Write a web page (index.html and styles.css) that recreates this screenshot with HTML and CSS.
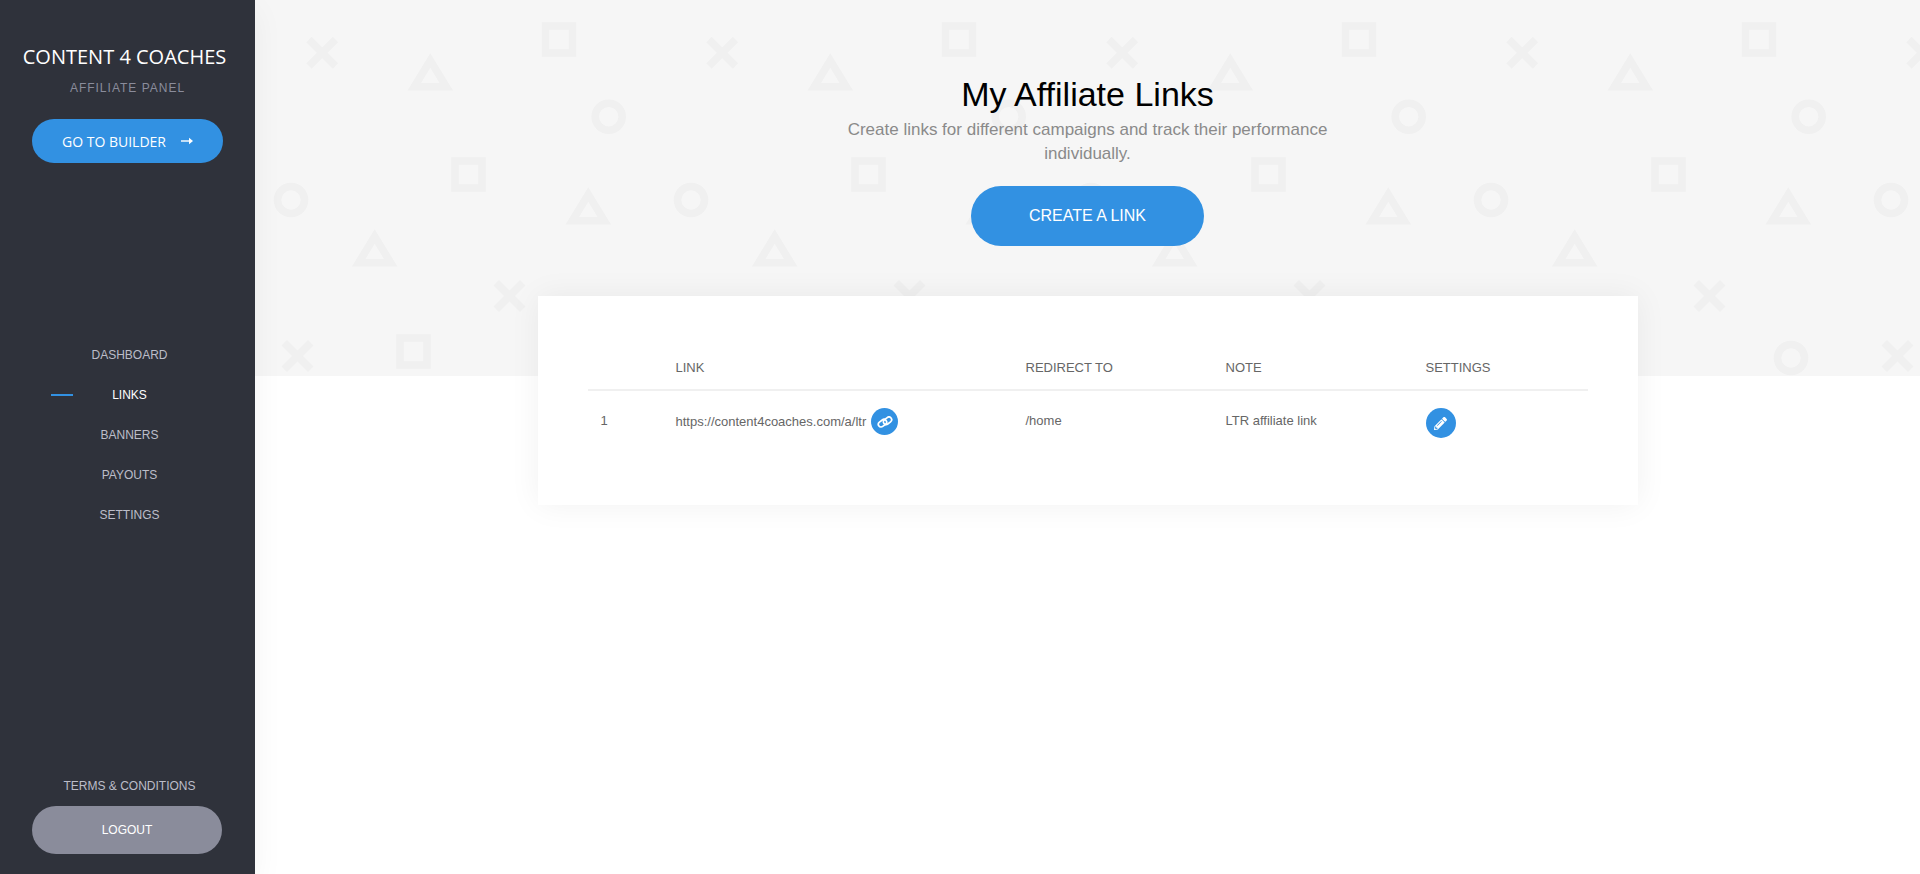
FILE: index.html
```
<!DOCTYPE html>
<html lang="en">
<head>
<meta charset="utf-8">
<meta name="viewport" content="width=device-width, initial-scale=1">
<title>My Affiliate Links</title>
<link rel="stylesheet" href="styles.css">
</head>
<body>
<div class="layout">
  <aside class="sidebar">
    <div class="sidebar-top">
      <div class="brand">CONTENT 4 COACHES</div>
      <div class="panel-name">AFFILIATE PANEL</div>
      <a class="builder-button" href="#">GO TO BUILDER
        <svg class="arrow-icon" viewBox="0 0 12 8" aria-hidden="true"><path d="M0 4h9" fill="none" stroke="currentColor" stroke-width="1.4"/><path d="M8 .8 12 4 8 7.2z" fill="currentColor"/></svg>
      </a>
    </div>
    <nav class="nav">
      <a class="nav-link" href="#">DASHBOARD</a>
      <a class="nav-link active" href="#" aria-current="page">LINKS</a>
      <a class="nav-link" href="#">BANNERS</a>
      <a class="nav-link" href="#">PAYOUTS</a>
      <a class="nav-link" href="#">SETTINGS</a>
    </nav>
    <div class="sidebar-bottom">
      <a class="nav-link" href="#">TERMS &amp; CONDITIONS</a>
      <button class="logout-button" type="button">LOGOUT</button>
    </div>
  </aside>
  <main class="main">
    <header class="hero">
      <svg class="hero-pattern" aria-hidden="true">
        <defs>
          <pattern id="shapes" width="400" height="400" patternUnits="userSpaceOnUse">
            <g fill="none" stroke="#f0f0f0" stroke-width="7.6">
              <path d="M54 39.500l26.500 26.500m0-26.500l-26.500 26.500"/>
              <path d="M241.200 282.800l26.500 26.500m0-26.500l-26.500 26.500"/>
              <path d="M29.200 342.800l26.500 26.500m0-26.500l-26.500 26.500"/>
              <path d="M175.300 60.500l-16 26.200h32z"/>
              <path d="M119.700 236.500l-16 26.200h32z"/>
              <path d="M333.300 194.500l-16 26.200h32z"/>
              <rect x="290.500" y="26" width="27" height="27"/>
              <rect x="200" y="161" width="27" height="27"/>
              <rect x="145" y="338" width="27" height="27"/>
              <circle cx="353.700" cy="116.700" r="13.500"/>
              <circle cx="36" cy="200" r="13.500"/>
              <circle cx="336" cy="358" r="13.500"/>
            </g>
          </pattern>
        </defs>
        <rect width="100%" height="100%" fill="url(#shapes)"/>
      </svg>
      <h1 class="title">My Affiliate Links</h1>
      <p class="subtitle">Create links for different campaigns and track their performance individually.</p>
      <button class="create-button" type="button">CREATE A LINK</button>
    </header>
    <section class="card">
      <table class="links">
        <thead>
          <tr><th class="col-index"></th><th class="col-link">LINK</th><th class="col-redirect">REDIRECT TO</th><th class="col-note">NOTE</th><th>SETTINGS</th></tr>
        </thead>
        <tbody>
          <tr>
            <td>1</td>
            <td>
              <div class="link-cell">https://content4coaches.com/a/ltr
                <button class="copy-button" type="button" aria-label="Copy link"><svg class="link-icon" viewBox="0 0 16 12" aria-hidden="true"><g fill="none" stroke="currentColor" stroke-width="1.7"><rect x="1" y="4.500" width="9" height="5.400" rx="2.700" transform="rotate(-38 5.500 7.200)"/><rect x="6" y="2.100" width="9" height="5.400" rx="2.700" transform="rotate(-38 10.500 4.800)"/></g></svg></button>
              </div>
            </td>
            <td>/home</td>
            <td>LTR affiliate link</td>
            <td><button class="edit-button" type="button" aria-label="Edit link"><svg class="pencil-icon" viewBox="0 0 512 512" aria-hidden="true"><path fill="currentColor" d="M497.9 142.1l-46.1 46.1c-4.7 4.7-12.3 4.7-17 0l-111-111c-4.700-4.700-4.700-12.300 0-17l46.100-46.100c18.700-18.700 49.100-18.700 67.900 0l60.100 60.100c18.800 18.700 18.800 49.100 0 67.900zM284.200 99.800L21.600 362.400.4 483.900c-2.900 16.400 11.400 30.600 27.800 27.800l121.500-21.300 262.600-262.600c4.700-4.700 4.700-12.300 0-17l-111-111c-4.800-4.700-12.400-4.700-17.100 0zM124.100 339.900c-5.500-5.500-5.500-14.300 0-19.800l154-154c5.500-5.500 14.300-5.500 19.800 0s5.500 14.300 0 19.800l-154 154c-5.500 5.500-14.300 5.500-19.800 0zM88 424h48v36.300l-64.500 11.300-31.100-31.100L51.700 376H88v48z"/></svg></button></td>
          </tr>
        </tbody>
      </table>
    </section>
  </main>
</div>
</body>
</html>
```
FILE: styles.css
```
* { box-sizing: border-box; }

body {
  margin: 0;
  background: #fff;
  color: #666;
  font-family: "Liberation Sans", Arial, sans-serif;
  font-size: 13px;
}

a { text-decoration: none; }

button {
  padding: 0;
  border: 0;
  font-family: inherit;
  cursor: pointer;
}

.layout {
  display: flex;
  min-height: 100vh;
}

.sidebar {
  position: relative;
  z-index: 1;
  display: flex;
  flex-direction: column;
  flex: 0 0 255px;
  background: #2f323b;
  box-shadow: 0 10px 30px rgba(0, 0, 0, 0.05);
  text-align: center;
}

.sidebar-top {
  flex: 1;
  padding: 42px 0 0;
}

.brand {
  padding-right: 6px;
  color: #fff;
  font-family: "Open Sans", sans-serif;
  font-size: 20px;
  line-height: 30px;
}

.panel-name {
  margin-top: 6px;
  color: #8a8c9b;
  font-size: 12px;
  line-height: 20px;
  letter-spacing: 1px;
}

.builder-button {
  display: flex;
  align-items: center;
  justify-content: center;
  gap: 15px;
  height: 44px;
  margin: 21px 32px 0;
  border-radius: 22px;
  background: #3291e2;
  color: #fff;
  font-family: "Open Sans", sans-serif;
  font-size: 14px;
}

.arrow-icon {
  width: 12px;
  height: 8px;
}

.nav {
  padding-bottom: 26px;
}

.nav-link {
  position: relative;
  display: block;
  padding-left: 4px;
  color: #bcbdc9;
  font-size: 12px;
  line-height: 40px;
}

.nav-link.active { color: #fff; }

.nav-link.active::before {
  content: "";
  position: absolute;
  top: 19px;
  left: 51px;
  width: 22px;
  height: 2px;
  background: #3291e2;
}

.sidebar-bottom {
  display: flex;
  flex: 1;
  flex-direction: column;
  justify-content: flex-end;
  padding-bottom: 20px;
}

.logout-button {
  height: 48px;
  margin: 0 33px 0 32px;
  border-radius: 24px;
  background: #8a8c9b;
  color: #fff;
  font-size: 12px;
}

.main {
  flex: 1;
  min-width: 0;
}

.hero {
  position: relative;
  display: flex;
  flex-direction: column;
  align-items: center;
  padding: 72px 24px 130px;
  background: #f6f6f6;
  text-align: center;
}

.hero > * { position: relative; }

.hero > .hero-pattern {
  position: absolute;
  inset: 0;
  width: 100%;
  height: 100%;
}

.title {
  margin: 0;
  color: #000;
  font-size: 34px;
  font-weight: 400;
  line-height: 45px;
}

.subtitle {
  max-width: 500px;
  margin: 1px 0 20px;
  color: #8a8a8a;
  font-size: 17px;
  line-height: 24px;
}

.create-button {
  height: 60px;
  padding: 0 58px;
  border-radius: 30px;
  background: #3291e2;
  color: #fff;
  font-size: 16px;
}

.card {
  position: relative;
  max-width: 1100px;
  margin: -80px auto 50px;
  padding: 50px;
  background: #fff;
  box-shadow: 0 0 30px rgba(0, 0, 0, 0.06);
}

.links {
  width: 100%;
  border-collapse: separate;
  border-spacing: 0;
  table-layout: fixed;
}

.links th,
.links td {
  text-align: left;
  font-weight: 400;
}

.links th {
  height: 45px;
  padding: 0 13px;
  border-bottom: 2px solid #f0f0f0;
}

.links td {
  padding: 17px 13px;
  line-height: 26px;
  vertical-align: top;
}

.col-index { width: 7.5%; }
.col-link { width: 35%; }
.col-redirect,
.col-note { width: 20%; }

.link-cell {
  display: flex;
  align-items: center;
  gap: 5px;
}

.copy-button,
.edit-button {
  display: flex;
  align-items: center;
  justify-content: center;
  border-radius: 50%;
  background: #3291e2;
  color: #fff;
}

.copy-button {
  width: 27px;
  height: 27px;
}

.edit-button {
  width: 30px;
  height: 30px;
}

.link-icon {
  width: 16px;
  height: 12px;
}

.pencil-icon {
  width: 13px;
  height: 13px;
}
```
